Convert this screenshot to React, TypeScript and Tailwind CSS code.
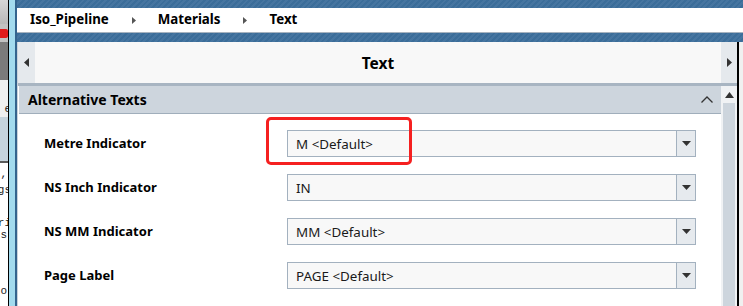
import React from 'react';

const rows = [
  { label: 'Metre Indicator', value: 'M <Default>' },
  { label: 'NS Inch Indicator', value: 'IN' },
  { label: 'NS MM Indicator', value: 'MM <Default>' },
  { label: 'Page Label', value: 'PAGE <Default>' },
];

const stripe =
  'bg-[repeating-linear-gradient(135deg,#3b6d99_0px,#3b6d99_2px,#4675a0_2px,#4675a0_4px)]';

const Crumb = ({ text, arrow }: { text: string; arrow?: boolean }) => (
  <div className="flex items-center">
    <span className="text-[13.3px] font-bold text-black">{text}</span>
    {arrow && (
      <svg width="4" height="7" viewBox="0 0 4 7" className="ml-[23px] mr-[22px]">
        <path d="M0 0 L4 3.5 L0 7 Z" fill="#555" />
      </svg>
    )}
  </div>
);

const Dropdown = ({ value }: { value: string }) => (
  <div className="flex h-[27px] w-[409px] border border-[#a3b1bf] bg-[#f8f8f8]">
    <div className="flex flex-1 items-center pl-[8px] pt-[1px] text-[13.4px] text-[#1a1a1a]">{value}</div>
    <div className="flex w-[19px] items-center justify-center border-l border-[#a3b1bf] bg-[#e6eaee]">
      <svg width="9" height="5" viewBox="0 0 9 5">
        <path d="M0 0 H9 L4.5 5 Z" fill="#333" />
      </svg>
    </div>
  </div>
);

const LeftStrip = () => (
  <div className="flex w-[8px] flex-col overflow-hidden font-['Liberation_Mono',monospace] text-[11px] leading-none text-[#222]">
    <div className="h-[24px] bg-gradient-to-b from-[#d6d6d6] to-[#b9b9b9]" />
    <div className="flex h-[18px] items-center bg-[#c2c2c2]">
      <div className="ml-[-2px] h-[9px] w-[10px] rounded-[2px] bg-[#e21b1b]" />
    </div>
    <div className="h-[38px] bg-[#7b7b7b]" />
    <div className="flex h-[37px] items-end justify-end bg-[#f0f0f0] pb-[2px]">
      <span className="mr-[-3px]">e</span>
    </div>
    <div className="h-[46px] border-b-2 border-[#5a5a5a] bg-[#c6d4dd]" />
    <div className="flex flex-1 flex-col items-end bg-white pt-[6px]">
      <span className="mr-[1px] h-[16px]">,</span>
      <span className="mr-[-3px] h-[16px]">gs</span>
      <span className="h-[17px]" />
      <span className="mr-[-3px] h-[12px]">ri</span>
      <span className="mr-[1px] h-[56px]">s</span>
      <span className="mr-[1px]">o</span>
    </div>
  </div>
);

const App: React.FC = () => {
  return (
    <div className="relative flex h-[306px] w-[743px] overflow-hidden bg-[#f0f0f0] font-['Noto_Sans',sans-serif]">
      <LeftStrip />
      <div className="w-px bg-black" />
      <div className="w-[6px] bg-[#a3dbee]" />
      <div className="w-[2px] bg-[#34648e]" />

      <div className={`flex flex-1 flex-col ${stripe}`}>
        <div className="h-[8px]" />
        {/* breadcrumb */}
        <div className="flex h-[25px] items-center border-b border-[#a7b3bf] bg-white pl-[13px]">
          <Crumb text="Iso_Pipeline" arrow />
          <Crumb text="Materials" arrow />
          <Crumb text="Text" />
        </div>
        <div className="h-[9px]" />

        <div className="flex flex-1">
          <div className="flex flex-1 flex-col bg-[#c9d2db] pl-[1px]">
            {/* title bar */}
            <div className="flex h-[41px] bg-[#f8f8f8]">
              <div className="flex w-[17px] items-center justify-center bg-[#e5e9ed]">
                <svg width="5" height="9" viewBox="0 0 5 9">
                  <path d="M5 0 L0 4.5 L5 9 Z" fill="#333" />
                </svg>
              </div>
              <div className="flex flex-1 items-center justify-center pt-[3px] text-[15.5px] font-bold text-black">
                Text
              </div>
              <div className="flex w-[16px] items-center justify-center bg-[#e5e9ed]">
                <svg width="5" height="9" viewBox="0 0 5 9">
                  <path d="M0 0 L5 4.5 L0 9 Z" fill="#333" />
                </svg>
              </div>
            </div>
            <div className="h-[3px] bg-[#a8b5c2]" />

            <div className="flex flex-1">
              <div className="flex flex-1 flex-col bg-white pl-[1px]">
                {/* section header */}
                <div className="flex h-[28px] items-center justify-between border-b border-[#a0aebb] bg-[#cdd5dd] pl-[9px] pr-[8px]">
                  <span className="text-[14px] font-bold text-black">Alternative Texts</span>
                  <svg width="12" height="7" viewBox="0 0 12 7">
                    <polyline points="0.5,6.5 6,1 11.5,6.5" fill="none" stroke="#333" strokeWidth="1.3" />
                  </svg>
                </div>
                <div className="flex flex-col pt-[16px]">
                  {rows.map(r => (
                    <div key={r.label} className="mb-[17px] flex items-center">
                      <div className="w-[268px] pl-[25px] pt-[1px] text-[13px] font-bold text-black">{r.label}</div>
                      <Dropdown value={r.value} />
                    </div>
                  ))}
                </div>
              </div>
              {/* scrollbar */}
              <div className="flex w-[16px] flex-col items-center bg-[#f0f2f4]">
                <svg width="9" height="6" viewBox="0 0 9 6" className="mt-[6px]">
                  <path d="M0 6 L4.5 0 L9 6 Z" fill="#333" />
                </svg>
                <div className="mt-[5px] w-[12px] flex-1 bg-[#cdd5dd]" />
              </div>
            </div>
          </div>
          <div className="w-[2px] bg-black" />
          <div className="w-[4px] bg-[#f0f0f0]" />
        </div>
      </div>

      {/* red highlight */}
      <div className="absolute left-[266px] top-[117px] h-[48px] w-[146px] rounded-[5px] border-[3px] border-[#f52020]" />
    </div>
  );
};

export default App;
